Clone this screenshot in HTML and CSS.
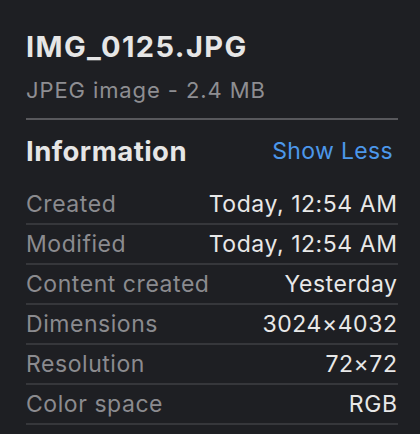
FILE: index.html
```html
<!DOCTYPE html>
<html>
<head>
<meta charset="utf-8">
<link rel="stylesheet" href="styles.css">
</head>
<body>
<div class="panel">
  <div class="title">IMG_0125.JPG</div>
  <div class="subtitle">JPEG image - 2.4 MB</div>
  <div class="divider"></div>
  <div class="section-head">
    <div class="section-title">Information</div>
    <div class="toggle">Show Less</div>
  </div>
  <div class="rows">
    <div class="row"><span class="label">Created</span><span class="value">Today, 12:54 AM</span></div>
    <div class="row"><span class="label">Modified</span><span class="value">Today, 12:54 AM</span></div>
    <div class="row"><span class="label">Content created</span><span class="value">Yesterday</span></div>
    <div class="row"><span class="label">Dimensions</span><span class="value">3024×4032</span></div>
    <div class="row"><span class="label">Resolution</span><span class="value">72×72</span></div>
    <div class="row"><span class="label">Color space</span><span class="value">RGB</span></div>
  </div>
</div>
</body>
</html>
```
FILE: styles.css
```css
html, body {
  margin: 0;
  padding: 0;
  background: #1e1f23;
}
body {
  width: 420px;
  height: 434px;
  overflow: hidden;
  font-family: Inter, "Noto Sans", sans-serif;
}
.panel {
  padding: 30px 22px 0 26px;
}
.title {
  font-size: 29px;
  line-height: 34px;
  font-weight: 700;
  letter-spacing: 1.4px;
  color: #e6e6e6;
}
.subtitle {
  margin-top: 11.5px;
  font-size: 22px;
  line-height: 28px;
  letter-spacing: 0.9px;
  color: #8e8e92;
}
.divider {
  margin-top: 14.5px;
  height: 2px;
  background: #58585c;
}
.section-head {
  height: 65px;
  display: flex;
  justify-content: space-between;
  align-items: flex-start;
  padding-top: 15px;
  box-sizing: border-box;
}
.section-title {
  font-size: 27.5px;
  line-height: 32px;
  font-weight: 700;
  letter-spacing: 0.45px;
  color: #e6e6e6;
}
.toggle {
  font-size: 23px;
  line-height: 32px;
  letter-spacing: 0.35px;
  color: #4c97ea;
  padding-right: 5px;
}
.row {
  height: 40px;
  box-sizing: border-box;
  border-bottom: 2px solid #36373b;
  display: flex;
  justify-content: space-between;
  font-size: 23px;
  line-height: 38px;
  letter-spacing: 0.55px;
}
.label {
  color: #8b8b8f;
}
.value {
  color: #e8e8e8;
  margin-right: 0.5px;
}
```
